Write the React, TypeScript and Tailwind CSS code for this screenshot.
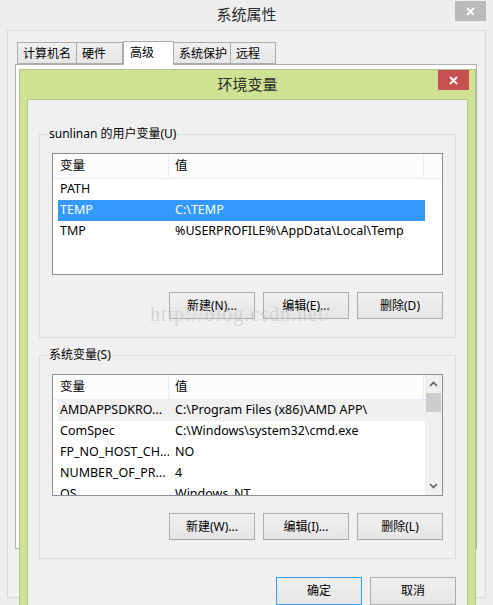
import React from "react";

const FONT = "font-['Noto_Sans','Noto_Sans_CJK_SC',sans-serif]";

function WinButton({ label, primary, h = "h-[27px]" }: { label: string; primary?: boolean; h?: string }) {
  return (
    <div
      className={`w-[86px] ${h} flex items-center justify-center text-[12px] text-black bg-gradient-to-b from-[#f0f0f0] to-[#e5e5e5] border ${
        primary ? "border-[#3c9cf0]" : "border-[#acacac]"
      }`}
    >
      {label}
    </div>
  );
}

type Row = { name: string; value: string; state?: "sel" | "hover" };

function ListBox({ rows, scroll }: { rows: Row[]; scroll?: boolean }) {
  return (
    <div className="h-[122px] border border-[#8e8f94] bg-white flex overflow-hidden text-[12.5px]">
      <div className="flex-1 flex flex-col min-w-0">
        <div className="h-[25px] shrink-0 flex bg-[#fcfcfc] border-b border-[#e6eef9]">
          <div className="w-[116px] shrink-0 pl-[7px] flex items-center border-r border-[#e6eef9]">变量</div>
          <div className="w-[255px] shrink-0 pl-[6px] flex items-center border-r border-[#e6eef9]">值</div>
        </div>
        <div className="flex flex-col pl-[5px]">
          {rows.map((r) => (
            <div
              key={r.name}
              className={`h-[21px] shrink-0 w-[367px] flex items-center ${
                r.state === "sel" ? "bg-[#3399ff] text-white" : r.state === "hover" ? "bg-[#f0f0f0]" : ""
              }`}
            >
              <div className="w-[111px] shrink-0 pl-[2px] whitespace-nowrap overflow-hidden">{r.name}</div>
              <div className="pl-[6px] whitespace-nowrap">{r.value}</div>
            </div>
          ))}
        </div>
      </div>
      {scroll && (
        <div className="w-[17px] shrink-0 bg-[#f0f0f0] flex flex-col items-center">
          <div className="h-[18px] w-full flex items-center justify-center">
            <svg width="9" height="6" viewBox="0 0 9 6">
              <path d="M1 5 L4.5 1.5 L8 5" fill="none" stroke="#606060" strokeWidth="1.6" />
            </svg>
          </div>
          <div className="w-[15px] h-[19px] bg-[#cdcdcd]" />
          <div className="flex-1" />
          <div className="h-[18px] w-full flex items-center justify-center">
            <svg width="9" height="6" viewBox="0 0 9 6">
              <path d="M1 1 L4.5 4.5 L8 1" fill="none" stroke="#606060" strokeWidth="1.6" />
            </svg>
          </div>
        </div>
      )}
    </div>
  );
}

function Group({ title, children }: { title: string; children: React.ReactNode }) {
  return (
    <div className="relative border border-[#dcdcdc] px-[12px] pt-[18px] pb-[18px]">
      <div className="absolute left-[8px] top-[-10px] px-[1px] bg-[#f0f0f0] text-[12px] leading-[18px]">{title}</div>
      {children}
    </div>
  );
}

export default function App() {
  const tabs = ["计算机名", "硬件", "高级", "系统保护", "远程"];
  const tabW = [60, 47, 51, 58, 46];
  return (
    <div className={`relative w-[493px] h-[605px] overflow-hidden bg-[#eeeeee] text-[12px] text-black ${FONT}`}>
      {/* outer window title */}
      <div className="h-[30px] flex items-center justify-center text-[15px] text-[#2b2b2b] pb-[1px]">系统属性</div>
      <div className="absolute left-[455px] top-[1px] w-[31px] h-[20px] bg-[#bababa] flex items-center justify-center">
        <svg width="9" height="9" viewBox="0 0 9 9">
          <path d="M1 1 L8 8 M8 1 L1 8" stroke="white" strokeWidth="1.8" />
        </svg>
      </div>
      {/* outer panel */}
      <div className="absolute left-[7px] top-[30px] w-[479px] h-[568px] border border-[#d9d9d9] bg-[#f0f0f0]">
        <div className="flex items-end pl-[9px] pt-[9px] h-[33px]">
          {tabs.map((t, i) => (
            <div
              key={t}
              style={{ width: tabW[i] }}
              className={
                i === 2
                  ? "h-[24px] bg-white border border-b-0 border-[#acacac] pl-[6px] pt-[2px] relative z-10 -mb-[1px]"
                  : "h-[22px] bg-gradient-to-b from-[#f0f0f0] to-[#e5e5e5] border border-[#acacac] -ml-[1px] first:ml-0 pl-[5px] pt-[2px]"
              }
            >
              {t}
            </div>
          ))}
        </div>
        <div className="ml-[7px] w-[462px] h-[485px] bg-white border border-[#b0b0b0]" />
      </div>

      {/* inner dialog */}
      <div className="absolute left-[19px] top-[69px] w-[457px] h-[545px] bg-[#cfe293] border border-[#b3c78a] flex flex-col">
        <div className="h-[29px] shrink-0 flex items-center justify-center text-[15px] text-[#2b2b2b] relative">
          环境变量
          <div className="absolute right-[6px] top-[0px] w-[31px] h-[20px] bg-[#c75050] flex items-center justify-center">
            <svg width="9" height="9" viewBox="0 0 9 9">
              <path d="M1 1 L8 8 M8 1 L1 8" stroke="white" strokeWidth="1.8" />
            </svg>
          </div>
        </div>
        <div className="flex-1 mx-[7px] bg-[#f0f0f0] border border-[#b3c78a] px-[11px] pt-[34px] flex flex-col">
          <Group title="sunlinan 的用户变量(U)">
            <ListBox
              rows={[
                { name: "PATH", value: "" },
                { name: "TEMP", value: "C:\\TEMP", state: "sel" },
                { name: "TMP", value: "%USERPROFILE%\\AppData\\Local\\Temp" },
              ]}
            />
            <div className="mt-[17px] flex justify-end gap-[8px]">
              <WinButton label="新建(N)..." />
              <WinButton label="编辑(E)..." />
              <WinButton label="删除(D)" />
            </div>
          </Group>
          <div className="h-[17px]" />
          <Group title="系统变量(S)">
            <ListBox
              scroll
              rows={[
                { name: "AMDAPPSDKRO...", value: "C:\\Program Files (x86)\\AMD APP\\", state: "hover" },
                { name: "ComSpec", value: "C:\\Windows\\system32\\cmd.exe" },
                { name: "FP_NO_HOST_CH...", value: "NO" },
                { name: "NUMBER_OF_PR...", value: "4" },
                { name: "OS", value: "Windows_NT" },
              ]}
            />
            <div className="mt-[17px] flex justify-end gap-[8px]">
              <WinButton label="新建(W)..." />
              <WinButton label="编辑(I)..." />
              <WinButton label="删除(L)" />
            </div>
          </Group>
          <div className="mt-[18px] flex justify-end gap-[8px]">
            <WinButton label="确定" primary h="h-[28px]" />
            <WinButton label="取消" h="h-[28px]" />
          </div>
        </div>
      </div>

      {/* watermark */}
      <div className="absolute left-[150px] top-[299px] text-[20px] tracking-[1px] text-[#c8c8c8]/70 font-['Liberation_Serif',serif] pointer-events-none">
        http://blog.csdn.net/
      </div>
    </div>
  );
}
